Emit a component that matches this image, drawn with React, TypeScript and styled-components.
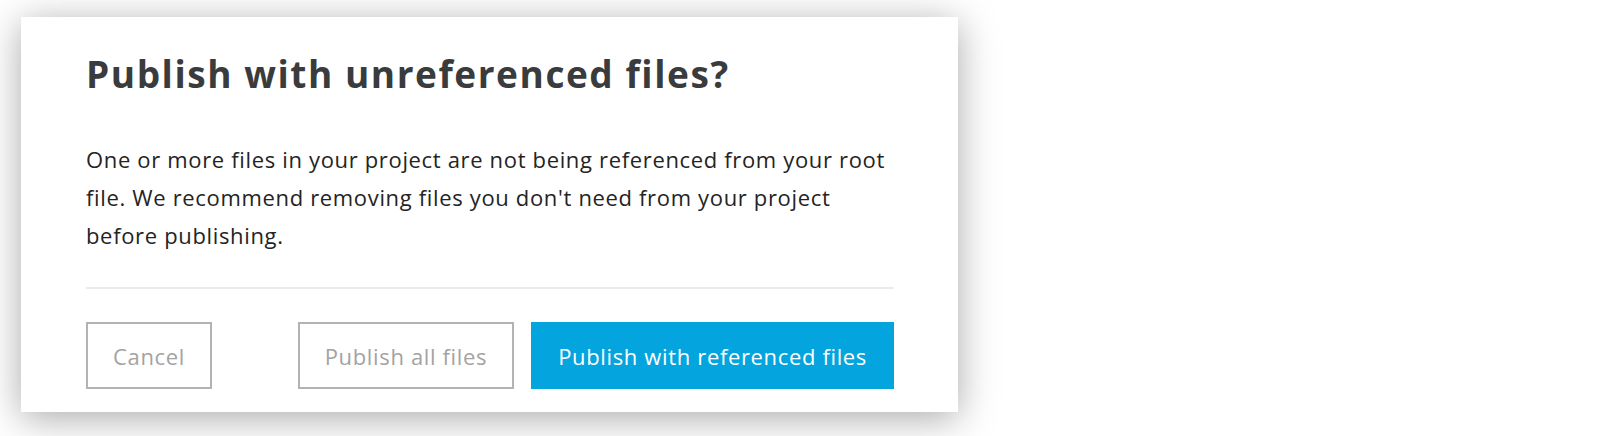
import React from "react";
import styled, { createGlobalStyle } from "styled-components";

const Global = createGlobalStyle`
  html, body { margin: 0; padding: 0; background: #ffffff; }
  body { font-family: "Open Sans", "Noto Sans", sans-serif; }
  * { box-sizing: border-box; }
`;

const Page = styled.div`
  width: 1620px;
  height: 436px;
  padding: 17px 0 0 21px;
  overflow: hidden;
`;

const Dialog = styled.div`
  width: 937px;
  height: 395px;
  background: #ffffff;
  box-shadow: 0 6px 36px rgba(0, 0, 0, 0.34);
  padding: 33px 64px 22px 65px;
  display: flex;
  flex-direction: column;
`;

const Title = styled.h1`
  margin: 0;
  font-size: 37px;
  line-height: 48px;
  font-weight: 700;
  letter-spacing: 1.55px;
  color: #3a3b3d;
`;

const Body = styled.p`
  margin: 42px 0 0;
  font-size: 22px;
  line-height: 38px;
  letter-spacing: 0.66px;
  color: #242424;
`;

const Divider = styled.hr`
  margin: 33px 0 0;
  border: 0;
  height: 2px;
  background: #ebebeb;
`;

const Actions = styled.div`
  margin-top: 33px;
  display: flex;
  align-items: center;
  justify-content: space-between;
`;

const Group = styled.div`
  display: flex;
  gap: 17px;
`;

const Button = styled.button<{ $primary?: boolean }>`
  height: 67px;
  padding: 0 25px;
  font-family: "Open Sans", "Noto Sans", sans-serif;
  font-size: 22px;
  letter-spacing: 0.65px;
  cursor: pointer;
  border: ${(p) => (p.$primary ? "2px solid #04a4de" : "2px solid #b3b3b3")};
  background: ${(p) => (p.$primary ? "#04a4de" : "#ffffff")};
  color: ${(p) => (p.$primary ? "#ffffff" : "#a3a3a3")};
`;

export default function App() {
  return (
    <>
      <Global />
      <Page>
        <Dialog>
          <Title>Publish with unreferenced files?</Title>
          <Body>
            One or more files in your project are not being referenced from your root
            <br />
            file. We recommend removing files you don't need from your project
            <br />
            before publishing.
          </Body>
          <Divider />
          <Actions>
            <Button>Cancel</Button>
            <Group>
              <Button>Publish all files</Button>
              <Button $primary>Publish with referenced files</Button>
            </Group>
          </Actions>
        </Dialog>
      </Page>
    </>
  );
}
